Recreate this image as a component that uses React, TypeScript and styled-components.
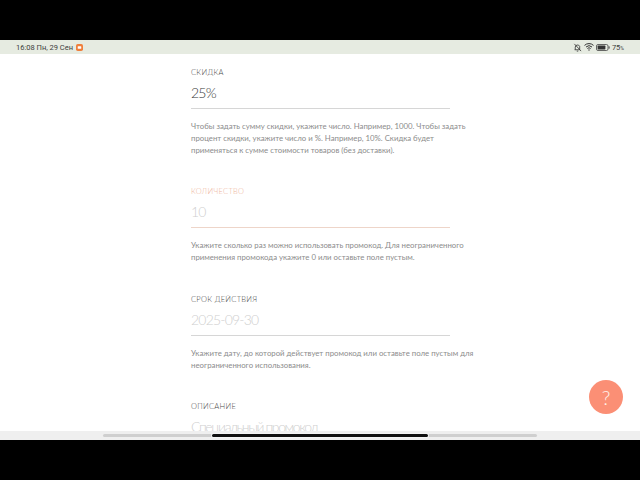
import React from "react";
import styled, { createGlobalStyle } from "styled-components";

const Global = createGlobalStyle`
  html, body { margin: 0; padding: 0; background: #000; }
  body { font-family: Lato, "Open Sans", "Liberation Sans", sans-serif; }
`;

const Screen = styled.div`
  position: relative;
  width: 640px;
  height: 480px;
  display: flex;
  flex-direction: column;
  overflow: hidden;
  background: #000;
`;
const Letterbox = styled.div`
  flex: 0 0 40px;
  background: #000;
`;
const StatusBar = styled.div`
  flex: 0 0 14px;
  display: flex;
  align-items: center;
  justify-content: space-between;
  padding: 0 16px;
  background: #e6ebe1;
  color: #3c403c;
  font-family: Roboto, sans-serif;
  font-size: 7.5px;
  font-weight: 400;
`;
const StatusLeft = styled.div`
  display: flex;
  align-items: center;
  gap: 3px;
`;
const StatusRight = styled.div`
  display: flex;
  align-items: center;
  gap: 2px;
`;
const Percent = styled.span`
  font-size: 5px;
`;
const Page = styled.main`
  flex: 1;
  min-height: 0;
  overflow: hidden;
  background: #fff;
  padding: 14px 0 0 191px;
`;
const Form = styled.div`
  width: 259px;
`;
const Field = styled.section<{ $gap: number }>`
  margin-bottom: ${(p) => p.$gap}px;
`;
const Label = styled.div<{ $active?: boolean }>`
  font-size: 7.5px;
  line-height: 10px;
  letter-spacing: 0.3px;
  font-weight: 300;
  color: ${(p) => (p.$active ? "#eeb59b" : "#4a4a4a")};
`;
const Value = styled.div<{ $muted?: boolean; $tracking?: number }>`
  margin-top: 2px;
  height: 28px;
  font-size: 14px;
  line-height: 26px;
  font-weight: 300;
  letter-spacing: ${(p) => p.$tracking ?? -0.8}px;
  color: ${(p) => (p.$muted ? "#cfcfcf" : "#3a3a3a")};
`;
const Rule = styled.div<{ $active?: boolean }>`
  height: 1px;
  background: ${(p) => (p.$active ? "#eed5c9" : "#d6d6d6")};
`;
const Hint = styled.p`
  margin: 11px 0 0;
  font-size: 7.8px;
  line-height: 12px;
  font-weight: 400;
  color: #8c8c8c;
  white-space: nowrap;
`;
const BottomBar = styled.div`
  flex: 0 0 9px;
  background: #efefef;
  display: flex;
  align-items: center;
  justify-content: center;
`;
const Track = styled.div`
  position: relative;
  width: 434px;
  height: 3px;
  border-radius: 2px;
  background: #cfcfcf;
`;
const Thumb = styled.div`
  position: absolute;
  left: 109px;
  top: 0;
  width: 216px;
  height: 3px;
  border-radius: 2px;
  background: #111;
  box-shadow: 0 0 0 1px #f4f4f4;
`;
const Help = styled.button`
  position: absolute;
  left: 589px;
  top: 380px;
  width: 34px;
  height: 34px;
  padding: 0;
  border: 0;
  border-radius: 50%;
  background: #fb8f75;
  color: #fff3ec;
  font-family: Lato, sans-serif;
  font-size: 20px;
  font-weight: 300;
  line-height: 34px;
  text-align: center;
`;

const Mail = () => (
  <svg width="7" height="7" viewBox="0 0 8 8">
    <rect width="8" height="8" rx="2" fill="#ef7f3c" />
    <rect x="2" y="2.5" width="4" height="3" rx="0.6" fill="#fff" />
  </svg>
);
const BellOff = () => (
  <svg width="9" height="9" viewBox="0 0 10 10" fill="none" stroke="#333" strokeWidth="0.9">
    <path d="M2.5 7.5V4.6A2.6 2.6 0 0 1 7.4 3.6V7.5H1.8M4.2 9h1.6M1.5 1l7.5 8" />
  </svg>
);
const Wifi = () => (
  <svg width="10" height="8" viewBox="0 0 10 8" fill="none" stroke="#333" strokeWidth="1">
    <path d="M0.5 2.4a6.5 6.5 0 0 1 9 0M2 4a4.4 4.4 0 0 1 6 0M3.4 5.5a2.3 2.3 0 0 1 3.2 0" />
    <circle cx="5" cy="7" r="0.7" fill="#333" stroke="none" />
  </svg>
);
const Battery = () => (
  <svg width="14" height="7" viewBox="0 0 14 7">
    <rect x="0.5" y="0.5" width="11.5" height="6" rx="1.5" fill="none" stroke="#444" strokeWidth="0.8" />
    <rect x="1.6" y="1.6" width="7.8" height="3.8" rx="0.6" fill="#333" />
    <rect x="12.6" y="2.3" width="1" height="2.4" rx="0.4" fill="#444" />
  </svg>
);

export default function App() {
  return (
    <Screen>
      <Global />
      <Letterbox />
      <StatusBar>
        <StatusLeft>
          <span>16:08 Пн, 29 Сен</span>
          <Mail />
        </StatusLeft>
        <StatusRight>
          <BellOff />
          <Wifi />
          <Battery />
          <span>
            75<Percent>%</Percent>
          </span>
        </StatusRight>
      </StatusBar>
      <Page>
        <Form>
          <Field $gap={31}>
            <Label>СКИДКА</Label>
            <Value>25%</Value>
            <Rule />
            <Hint>
              Чтобы задать сумму скидки, укажите число. Например, 1000. Чтобы задать
              <br />
              процент скидки, укажите число и %. Например, 10%. Скидка будет
              <br />
              применяться к сумме стоимости товаров (без доставки).
            </Hint>
          </Field>
          <Field $gap={31.5}>
            <Label $active>КОЛИЧЕСТВО</Label>
            <Value $muted>10</Value>
            <Rule $active />
            <Hint>
              Укажите сколько раз можно использовать промокод. Для неограниченного
              <br />
              применения промокода укажите 0 или оставьте поле пустым.
            </Hint>
          </Field>
          <Field $gap={31}>
            <Label>СРОК ДЕЙСТВИЯ</Label>
            <Value $muted>2025-09-30</Value>
            <Rule />
            <Hint>
              Укажите дату, до которой действует промокод или оставьте поле пустым для
              <br />
              неограниченного использования.
            </Hint>
          </Field>
          <Field $gap={0}>
            <Label>ОПИСАНИЕ</Label>
            <Value $muted $tracking={-1.4}>Специальный промокод</Value>
          </Field>
        </Form>
      </Page>
      <BottomBar>
        <Track>
          <Thumb />
        </Track>
      </BottomBar>
      <Letterbox />
      <Help>?</Help>
    </Screen>
  );
}
